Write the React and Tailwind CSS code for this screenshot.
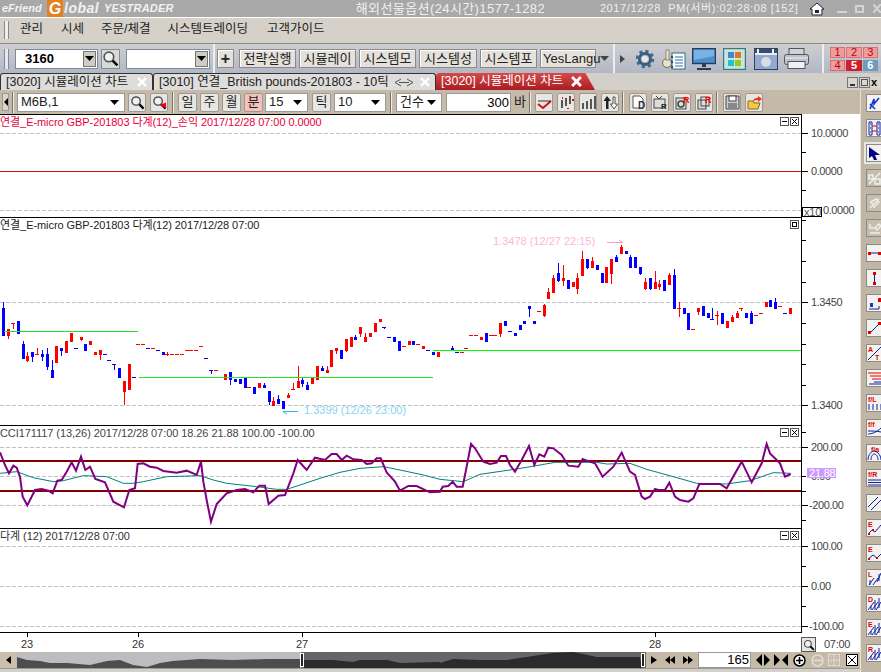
import React from "react";

// candles read off the chart: [colour, x, bodyTop, bodyBottom, wickTop, wickBottom], 3x coordinates
const blockA = [
  ["b",10,54,138,36,138],["r",25,118,138,118,147],["r",40,100,100,100,117],["b",55,93,132],["b",70,162,207,153,207],
  ["r",82,198,213,186,215],["b",97,186,201,186,216],["r",112,193,193,174,195],["b",127,192,201,180,213],["b",142,192,231,174,240],
  ["b",157,240,264,210,264],["r",169,168,219],["b",184,174,183,174,198],["r",199,153,189],["r",214,129,156],["b",229,175,175],
  ["r",244,141,150,141,153],["b",256,162,183],["r",271,153,165],["r",286,186,195],["r",301,180,195,180,210],["b",316,193,193],
  ["b",328,211,211],["b",343,223,223,222,240],["b",358,234,264],["r",373,273,306,273,345],["r",388,222,300],["b",403,262,262],
  ["r",415,163,163],["r",430,163,163],["b",445,175,175],["r",460,175,175],["b",475,181,181],["b",490,186,195],["r",502,193,193,186,198],
  ["r",517,193,193],["r",532,193,193],["r",547,193,193],["r",562,181,181],["r",574,181,181],["r",589,181,181],["r",604,169,169],
  ["b",619,205,205],["b",634,241,241,240,252],["r",649,241,241],["r",676,252,270],["b",691,246,270,246,285],["b",706,267,276],
  ["b",721,267,282],["b",736,264,294],["r",748,292,292],["b",763,291,312],["r",778,279,294],["b",793,285,294,279,294],
  ["b",808,303,335,303,345],["r",820,333,348,321,348],["b",835,327,342,315,342],["b",850,333,357],["r",865,315,324,309,324],
  ["r",880,298,298,279,300],["r",895,273,294,228,294],
];
const blockB = [
  ["b",907,240,252,231,261],["b",922,255,270,246,270],["r",937,234,252],["r",952,198,240],["b",967,204,213,198,213],["r",982,210,219,198,219],
  ["r",994,150,201],["r",1009,144,153,144,162],["b",1024,150,177],["r",1039,117,153,117,156],["r",1054,111,141],["b",1066,111,120,105,120],
  ["r",1081,81,102,81,111],["r",1096,111,126,99,126],["r",1111,99,111],["r",1126,69,96],["r",1141,57,66],["b",1153,81,81,81,87],
  ["b",1168,112,112],["b",1183,111,126],["b",1198,123,153],["r",1213,138,138],["r",1228,123,135],["b",1240,123,135],["r",1255,132,132],
  ["r",1270,138,147],["b",1285,150,150],["b",1300,156,165],["r",1315,156,171],
];
const blockC = [
  ["b",38,144,150,138,150],["b",53,156,156],["r",68,157,157],["r",80,145,145],["r",95,106,106],["r",110,106,106],["r",125,111,120],
  ["b",140,99,126],["r",155,106,106],["r",167,106,106],["r",182,69,102,69,111],["b",197,63,78],["b",212,94,94],["b",227,99,108],
  ["b",242,75,90],["b",254,63,72],["b",269,18,27,18,51],["b",284,63,72],["r",299,34,34],["r",314,15,48,12,51],
];
const blockD = [
  ["r",205,186,207,174,207],["r",220,144,189,135,189],["b",235,129,153,99,156],["r",250,144,153,105,168],["b",265,150,177],["r",280,156,171],
  ["r",292,144,177,129,192],["r",307,87,138,63,138],["b",322,87,114,87,117],["r",337,93,114,81,114],["b",352,105,120],["b",367,129,159],
  ["r",380,111,159],["r",394,87,132,87,162],["b",409,81,96,75,96],["r",424,51,72,45,72],["b",439,63,72],["b",451,81,114,75,114],
  ["b",466,81,114],["b",481,111,132,111,135],["r",496,156,177,144,180],["b",511,144,177,144,180],["r",526,156,177,123,177],
  ["r",538,162,171,150,180],["b",553,150,183],["r",568,135,165,129,165],["b",583,135,237,117,237],["r",598,234,234,216,261],
  ["b",613,234,252],["b",625,249,300],["r",640,298,298],["r",655,234,246,234,255],["b",670,228,258],["b",685,249,264],
  ["b",697,268,268,234,270],["r",712,256,256,243,285],["b",727,249,282],["r",742,273,294],["r",757,261,276,255,276],
  ["r",772,249,264,243,264],["r",784,235,235,234,243],["b",799,249,264],["b",814,249,282,243,282],["r",829,256,256],["r",844,250,250],
  ["r",859,216,231],["b",871,210,231],["b",886,216,237,204,237],["r",901,229,229],["b",916,250,250],["r",931,234,252],
];

const toCandles = (rows, ox, oy) =>
  rows.map(([c, x, bt, bb, wt, wb]) => ({
    c: c === "r" ? "#ff0000" : "#0000ff",
    x: Math.floor(ox + x / 3),
    bt: Math.round(oy + bt / 3),
    bh: Math.max(1, Math.round((bb - bt) / 3)),
    wt: wt === undefined ? null : Math.round(oy + wt / 3),
    wh: wt === undefined ? 0 : Math.round((wb - wt) / 3),
    doji: bb === bt,
  }));

const candles = [
  ...toCandles(blockA, 0, 290),
  ...toCandles(blockB, 0, 300),
  ...toCandles(blockC, 440, 300),
  ...toCandles(blockD, 480, 230),
];

const pts = (ox, list) => list.map(([x, y]) => `${ox + x / 3},${300 + y / 3}`).join(" ");

const cciLine =
  pts(0, [[0,457],[15,495],[27,520],[40,497],[50,503],[60,530],[68,590],[82,616],[105,570],[125,567],[145,572],[158,580],[172,542],[185,540],[200,515],[215,487],[228,512],[243,470],[256,510],[270,500],[286,537],[315,547],[340,605],[372,622],[388,570],[405,565],[413,492],[430,490],[450,500],[470,503],[490,513],[530,518],[560,512],[590,525],[603,485],[610,545],[620,600],[633,665],[650,612],[680,580],[710,570],[735,567],[760,577],[778,557],[795,557],[806,612],[835,587],[855,585],[880,520],[893,480],[920,510],[945,473],[975,480],[995,462],[1010,462],[1025,480],[1040,467],[1060,478],[1085,480],[1100,492],[1115,490],[1130,475],[1142,475],[1160,517],[1185,545],[1200,572],[1225,558],[1250,558],[1290,577],[1320,575]]) +
  " " +
  pts(440, [[8,560],[25,558],[38,545],[50,560],[68,560],[80,500],[93,432],[105,445],[130,485],[150,492],[170,488],[183,468],[198,468],[210,495],[225,515],[245,480],[267,438],[283,495],[298,463],[313,470],[325,443],[340,445],[365,465],[385,497],[415,500],[428,477],[435,480],[465,490],[488,530],[520,500],[545,458],[570,515],[585,525],[605,590],[615,597],[630,590],[645,567],[655,570],[675,570],[688,548],[705,590],[720,600],[745,605],[760,595],[778,552],[840,552],[860,565],[905,485],[935,547],[965,490],[980,432],[990,460],[1020,490],[1035,530],[1052,522]]);

const cciAvg =
  pts(0, [[0,520],[50,515],[100,533],[160,545],[190,542],[250,527],[320,530],[370,550],[400,550],[430,545],[500,530],[600,527],[640,540],[680,550],[770,560],[830,568],[860,568],[900,555],[960,535],[1020,517],[1080,505],[1150,500],[1200,510],[1270,525],[1320,538]]) +
  " " +
  pts(440, [[70,545],[120,523],[230,507],[300,495],[345,487],[470,487],[500,492],[570,490],[620,508],[700,530],[770,550],[860,552],[930,542],[1000,518],[1052,520]]);

const Dash = ({ y }) => (
  <line x1="0" x2="801" y1={y + 0.5} y2={y + 0.5} stroke="#c0c0c0" strokeDasharray="4 2" shapeRendering="crispEdges" />
);

const HLine = ({ y, x1 = 0, x2 = 801, color, h = 1 }) => (
  <rect x={x1} y={y} width={x2 - x1} height={h} fill={color} shapeRendering="crispEdges" />
);

const PaneBox = ({ kind }) => (
  <div className="w-[9px] h-[9px] border border-[#555] bg-white flex items-center justify-center">
    {kind === "min" && <div className="w-[5px] h-px bg-black" />}
    {kind === "max" && <div className="w-[5px] h-[5px] border border-black" />}
    {kind === "close" && (
      <svg width="7" height="7" viewBox="0 0 7 7">
        <path d="M1 1L6 6M6 1L1 6" stroke="#000" />
      </svg>
    )}
  </div>
);

const Pane = ({ top, height, title, titleClass, boxes, children, axis, axisExtra }) => (
  <div className="flex" style={{ height }}>
    <div className="relative w-[802px] border-t border-r border-black">
      <svg width="801" height={height - 1} viewBox={`0 ${top + 1} 801 ${height - 1}`} className="block">
        {children}
      </svg>
      <div className={`absolute left-0 top-0 text-[11px] leading-[14px] tracking-[-0.07px] whitespace-nowrap ${titleClass}`}>{title}</div>
      <div className="absolute right-[2px] top-[2px] flex gap-[1px]">
        {boxes.map((b) => (
          <PaneBox key={b} kind={b} />
        ))}
      </div>
    </div>
    <svg width="59" height={height} viewBox={`802 ${top} 59 ${height}`} className="block overflow-visible">
      {axis.ticks.map((t) => (
        <rect key={t} x="802" y={t} width="4" height="1" fill="#000" />
      ))}
      {axis.major.map((t) => (
        <rect key={t} x="802" y={t} width="6" height="1" fill="#000" />
      ))}
      {axis.labels.map(([txt, y, x = 811]) => (
        <text key={txt + y} x={x} y={y + 4} fontSize="11" fill="#444" letterSpacing="-0.4" fontFamily="Liberation Sans">
          {txt}
        </text>
      ))}
      {axisExtra}
    </svg>
  </div>
);

const Arrow = ({ className = "", color = "#000" }) => (
  <svg width="9" height="5" viewBox="0 0 9 5" className={className}>
    <path d="M0 0H9L4.5 5Z" fill={color} />
  </svg>
);

const Glass = ({ size = 16, handle = "#000", extra }) => (
  <svg width={size} height={size} viewBox="0 0 16 16">
    <circle cx="6.5" cy="6.5" r="4.5" fill="#eef2f6" stroke="#555" strokeWidth="1.6" />
    <path d="M10 10L14.5 14.5" stroke={handle} strokeWidth="2.4" />
    {extra}
  </svg>
);

const TopCombo = ({ w, value }) => (
  <div className="flex items-center h-[20px] bg-white border border-[#7f8a9c] pr-[1px]" style={{ width: w }}>
    <span className="flex-1 pl-[9px] text-[13px] font-bold">{value}</span>
    <span className="w-[13px] h-[16px] bg-[#cfccc4] border border-[#777] flex items-center justify-center">
      <Arrow />
    </span>
  </div>
);

const TopBtn = ({ w, children, className = "" }) => (
  <div
    className={`flex items-center justify-center h-[19px] bg-[#e4e1da] border border-[#8a8a8a] shadow-[inset_1px_1px_0_#fff] text-[13px] text-[#222] ${className}`}
    style={{ width: w }}
  >
    {children}
  </div>
);

const GearIcon = () => (
  <svg width="20" height="20" viewBox="0 0 20 20">
    <circle cx="10" cy="10" r="7.6" fill="none" stroke="#456a8c" strokeWidth="3.4" strokeDasharray="3 3" />
    <circle cx="10" cy="10" r="5.6" fill="none" stroke="#3c5d80" strokeWidth="3" />
    <circle cx="10" cy="10" r="3" fill="#e8e8e8" />
  </svg>
);

const KeysIcon = () => (
  <svg width="25" height="22" viewBox="0 0 25 22">
    <circle cx="6" cy="15" r="4.5" fill="#e8e0c8" stroke="#6b6b55" />
    <rect x="5" y="2" width="3" height="10" fill="#efe6cc" stroke="#6b6b55" strokeWidth="0.7" />
    <rect x="11" y="5" width="13" height="16" fill="#fff" stroke="#2f6f7a" />
    <path d="M14 9h8M14 12h8M14 15h8M14 18h8" stroke="#2b6fa8" />
    <circle cx="11" cy="9" r="1.2" fill="#1d4e7e" />
    <circle cx="11" cy="14" r="1.2" fill="#1d4e7e" />
    <circle cx="11" cy="19" r="1.2" fill="#1d4e7e" />
  </svg>
);

const MonitorIcon = () => (
  <svg width="24" height="22" viewBox="0 0 24 22">
    <rect x="0.5" y="0.5" width="23" height="15" fill="#4a8fd0" stroke="#2c3a52" strokeWidth="1.4" />
    <path d="M2 2H22V8L2 12Z" fill="#79b2e4" />
    <path d="M10 16h4v3h-4z" fill="#2c3a52" />
    <path d="M5 20h14v2H5z" fill="#2c3a52" />
  </svg>
);

const PaletteIcon = () => (
  <svg width="23" height="22" viewBox="0 0 23 22">
    <rect x="0.5" y="0.5" width="22" height="21" fill="#cfe3de" stroke="#337f78" strokeWidth="1.4" />
    <rect x="5" y="4" width="6" height="6" fill="#3a8ad8" />
    <rect x="12" y="4" width="6" height="6" fill="#e07818" />
    <rect x="5" y="12" width="6" height="6" fill="#18c8d0" />
    <rect x="12" y="12" width="6" height="6" fill="#98c818" />
  </svg>
);

const CameraIcon = () => (
  <svg width="24" height="22" viewBox="0 0 24 22">
    <rect x="0.5" y="0.5" width="23" height="21" fill="#e8eef6" stroke="#33415c" />
    <rect x="1" y="1" width="22" height="4" fill="#3a4c70" />
    <path d="M4 1v4M19 1v4" stroke="#e8eef6" strokeWidth="2" />
    <rect x="1" y="7" width="22" height="14" fill="#93a9cf" />
    <circle cx="12" cy="14" r="5" fill="#d8dde6" />
  </svg>
);

const PrinterIcon = () => (
  <svg width="25" height="22" viewBox="0 0 25 22">
    <rect x="5" y="0.5" width="15" height="6" fill="#cfd4dc" stroke="#555" />
    <rect x="0.5" y="6.5" width="24" height="10" rx="2" fill="#bcc3ce" stroke="#555" />
    <path d="M1 10H24" stroke="#eef" />
    <rect x="4" y="13.5" width="17" height="7" fill="#eef0f4" stroke="#555" />
  </svg>
);

const PadCell = ({ n, className }) => (
  <div className={`h-[11px] flex items-center justify-center text-[11px] leading-none ${className}`}>{n}</div>
);

const TitleBar = () => (
  <div className="flex items-center h-[17px] bg-[#a8a8a8] text-white overflow-hidden">
    <div className="flex items-center w-[357px] pl-[2px] italic font-bold">
      <span className="text-[11px] w-[44px] text-[#f2f2f2]">eFriend</span>
      <span className="ml-[1px] w-[16px] h-[17px] bg-[#e5801f] text-[16px] leading-[17px] text-center text-white">G</span>
      <span className="text-[14px] ml-[1px] w-[40px] text-[#f2f2f2] tracking-[0.5px]">lobal</span>
      <span className="text-[11px] text-[#f2f2f2] tracking-[0.2px]">YESTRADER</span>
    </div>
    <span className="w-[245px] text-[13px] text-[#f0f0f0] tracking-[0.4px] whitespace-nowrap">해외선물옵션(24시간)1577-1282</span>
    <span className="w-[210px] text-[11px] text-[#f0f0f0] tracking-[0.6px] whitespace-nowrap">2017/12/28&nbsp;&nbsp;PM(서버):02:28:08 [152]</span>
    <svg width="16" height="14" viewBox="0 0 16 14">
      <path d="M8 1L1 7H3V13H13V7H15Z" fill="#fff" stroke="#223" />
      <rect x="6" y="8" width="4" height="3" fill="#223" />
    </svg>
    <div className="ml-[12px] w-[10px] h-[2px] mt-[7px] bg-[#d4d4d4]" />
    <div className="ml-[8px] w-[9px] h-[8px] border-[2px] border-[#d4d4d4]" />
    <svg width="8" height="9" viewBox="0 0 8 9" className="ml-[9px]">
      <path d="M0 0L8 9M8 0L0 9" stroke="#d4d4d4" strokeWidth="2" />
    </svg>
  </div>
);

const MenuBar = () => (
  <div className="flex items-center h-[26px] border-t border-white bg-[#d5d1c9] text-[12.5px] text-[#222] pb-[2px]">
    <div className="ml-[4px] w-[5px] h-[18px] border-x border-[#888] bg-[#eee]" />
    <span className="ml-[11px]">관리</span>
    <span className="ml-[18px]">시세</span>
    <span className="ml-[17px]">주문/체결</span>
    <span className="ml-[17px]">시스템트레이딩</span>
    <span className="ml-[19px]">고객가이드</span>
  </div>
);

const MainToolbar = () => (
  <div className="flex items-center h-[30px] border-t border-[#8a8a8a] bg-linear-to-b from-[#cfcfd0] to-[#b2b7c5]">
    <div className="ml-[4px] w-[5px] h-[20px] border-x border-[#7c8aa0] bg-[#e6e8ee]" />
    <div className="ml-[6px]">
      <TopCombo w={83} value="3160" />
    </div>
    <div className="ml-[3px] w-[19px] h-[20px] bg-[#d8d8d8] border border-[#8a8a8a] flex items-center justify-center">
      <Glass size={17} />
    </div>
    <div className="ml-[6px]">
      <TopCombo w={84} value="" />
    </div>
    <div className="ml-[3px] w-[2px] h-[30px] bg-[#eeeeee]" />
    <TopBtn w={17} className="ml-[2px] font-bold text-[16px]">+</TopBtn>
    <TopBtn w={57} className="ml-[5px]">전략실행</TopBtn>
    <TopBtn w={57} className="ml-[3px]">시뮬레이</TopBtn>
    <TopBtn w={57} className="ml-[3px]">시스템모</TopBtn>
    <TopBtn w={58} className="ml-[3px]">시스템성</TopBtn>
    <TopBtn w={57} className="ml-[3px]">시스템포</TopBtn>
    <TopBtn w={56} className="ml-[3px] justify-start! pl-[2px] text-[12px] whitespace-nowrap">YesLangu</TopBtn>
    <Arrow className="ml-[4px]" color="#444" />
    <div className="ml-[4px] w-[2px] h-[30px] bg-[#eeeeee]" />
    <svg width="5" height="8" viewBox="0 0 5 8" className="ml-[5px]">
      <path d="M0 0L5 4L0 8Z" fill="#444" />
    </svg>
    <div className="ml-[10px] flex items-center"><GearIcon /></div>
    <div className="ml-[6px] flex items-center"><KeysIcon /></div>
    <div className="ml-[6px] flex items-center"><MonitorIcon /></div>
    <div className="ml-[7px] flex items-center"><PaletteIcon /></div>
    <div className="ml-[8px] flex items-center"><CameraIcon /></div>
    <div className="ml-[6px] flex items-center"><PrinterIcon /></div>
    <div className="ml-[13px] w-[2px] h-[30px] bg-[#eeeeee]" />
    <div className="ml-[6px] w-[48px] grid grid-cols-3 gap-x-[1px] gap-y-[2px]">
      <PadCell n="1" className="bg-[#f39a9a] border border-[#d87070] text-[#a01010]" />
      <PadCell n="2" className="bg-[#f39a9a] border border-[#d87070] text-[#a01010]" />
      <PadCell n="3" className="bg-[#f39a9a] border border-[#d87070] text-[#a01010]" />
      <PadCell n="4" className="bg-[#f39a9a] border border-[#d87070] text-[#a01010]" />
      <PadCell n="5" className="bg-[#d0202e] text-white font-bold" />
      <PadCell n="6" className="bg-[#6f9bbc] text-white font-bold" />
    </div>
  </div>
);

const Tab = ({ w, children, icon }) => (
  <div
    className="relative flex items-center h-[17px] bg-[#dedddb] border-t border-x border-[#333] rounded-t-[3px] text-[12.5px] text-[#222] pl-[5px] whitespace-nowrap"
    style={{ width: w }}
  >
    {children}
    {icon}
    <svg width="10" height="10" viewBox="0 0 10 10" className="absolute right-[5px] top-[3px]">
      <path d="M1 1L9 9M9 1L1 9" stroke="#fff" strokeWidth="2.4" />
    </svg>
  </div>
);

const TabBar = () => (
  <div className="flex items-end h-[17px] bg-[#d3d0ca]">
    <Tab w={153}>[3020] 시뮬레이션 차트</Tab>
    <Tab
      w={283}
      icon={
        <svg width="20" height="9" viewBox="0 0 20 9" className="ml-[5px]">
          <path d="M7 1L1 4.5L7 8M13 1L19 4.5L13 8M5 4.5H15" fill="none" stroke="#555" />
        </svg>
      }
    >
      [3010] 연결_British pounds-201803 - 10틱
    </Tab>
    <div className="relative flex items-center w-[159px] h-[17px] bg-linear-to-b from-[#d84848] to-[#a81c24] rounded-tl-[3px] [clip-path:polygon(0_0,94%_0,100%_100%,0_100%)] text-[12.5px] text-white pl-[5px] whitespace-nowrap">
      [3020] 시뮬레이션 차트
      <svg width="11" height="11" viewBox="0 0 10 10" className="absolute right-[13px] top-[3px]">
        <path d="M1 1L9 9M9 1L1 9" stroke="#fff" strokeWidth="2.6" />
      </svg>
    </div>
    <div className="ml-auto flex gap-[1px] pr-[1px] pb-[2px]">
      <div className="w-[11px] h-[11px] bg-[#d8d5cf] border border-[#777] flex items-end justify-center pb-[1px]"><div className="w-[5px] h-[2px] bg-[#333]" /></div>
      <div className="w-[11px] h-[11px] bg-[#d8d5cf] border border-[#777] flex items-center justify-center"><div className="w-[7px] h-[7px] border border-[#555]" /></div>
      <div className="w-[9px] h-[11px] bg-[#d8d5cf] text-[11px] font-bold leading-[10px]">x</div>
    </div>
  </div>
);

const SmallBtn = ({ w = 19, children, className = "" }) => (
  <div
    className={`flex items-center justify-center h-[19px] bg-[#e8e6e2] border border-[#999] rounded-[2px] text-[13px] text-[#222] shrink-0 ${className}`}
    style={{ width: w }}
  >
    {children}
  </div>
);

const LowCombo = ({ w, value, className = "" }) => (
  <div className={`flex items-center justify-between h-[19px] bg-white border border-[#999] pl-[3px] pr-[5px] text-[13px] text-[#222] shrink-0 ${className}`} style={{ width: w }}>
    <span>{value}</span>
    <Arrow />
  </div>
);

const Sep = ({ ml }) => <div className="w-[2px] h-[21px] bg-[#77736a] border-r border-[#eee] shrink-0" style={{ marginLeft: ml }} />;

const Ico = ({ children }) => (
  <svg width="15" height="15" viewBox="0 0 15 15">
    {children}
  </svg>
);

const ChartToolbar = () => (
  <div className="flex items-center h-[24px] bg-[#c4baa7] overflow-hidden">
    <div className="ml-[2px] w-[7px] h-[18px] bg-[#d8d5cd] border border-[#999] flex items-center justify-center">
      <svg width="4" height="8" viewBox="0 0 4 8"><path d="M4 0L0 4L4 8Z" fill="#000" /></svg>
    </div>
    <Sep ml={3} />
    <LowCombo w={108} value="M6B,1" className="ml-[3px]" />
    <SmallBtn w={18} className="ml-[3px]"><Glass size={15} /></SmallBtn>
    <SmallBtn w={18} className="ml-[4px]">
      <Glass size={15} extra={<path d="M8 11L15 8V14Z" fill="#f00010" />} />
    </SmallBtn>
    <Sep ml={4} />
    <SmallBtn className="ml-[4px]">일</SmallBtn>
    <SmallBtn className="ml-[3px]">주</SmallBtn>
    <SmallBtn className="ml-[3px]">월</SmallBtn>
    <SmallBtn className="ml-[3px] bg-[#f8c0bc]!">분</SmallBtn>
    <LowCombo w={43} value="15" className="ml-[2px]" />
    <SmallBtn className="ml-[4px]">틱</SmallBtn>
    <LowCombo w={52} value="10" className="ml-[3px]" />
    <Sep ml={4} />
    <LowCombo w={46} value="건수" className="ml-[4px]" />
    <div className="ml-[4px] w-[65px] h-[19px] bg-white border border-[#999] text-[13px] text-right pr-[1px] leading-[17px] shrink-0">300</div>
    <span className="ml-[3px] text-[13px] text-[#222] w-[14px]">바</span>
    <Sep ml={1} />
    <SmallBtn w={18} className="ml-[4px]">
      <Ico><path d="M1 9L6 13L14 6" fill="none" stroke="#d01010" strokeWidth="2" /><path d="M1 6H14" stroke="#333" /></Ico>
    </SmallBtn>
    <SmallBtn w={18} className="ml-[4px]">
      <Ico><path d="M2 5h2v8H2zM6 3h2v8H6zM10 1h2v8h-2z" fill="#555" /><path d="M3 2h1v2H3zM8 13h2v1H8zM13 4h2v2h-2z" fill="#f00" /></Ico>
    </SmallBtn>
    <SmallBtn w={18} className="ml-[4px]">
      <Ico><path d="M1 8h2v6H1zM5 6h2v8H5zM9 4h2v10H9zM13 1h2v13h-2z" fill="#555" /></Ico>
    </SmallBtn>
    <SmallBtn w={18} className="ml-[4px]">
      <Ico><path d="M4 1L8 6H5.5V14H3V6H0.5Z" fill="#222" /><path d="M11 14L7.5 9H10V2H12V9H14.5Z" fill="#fff" stroke="#555" /></Ico>
    </SmallBtn>
    <Sep ml={3} />
    <SmallBtn w={18} className="ml-[5px]">
      <Ico><path d="M2 1H9L12 4V13H2Z" fill="#fff" stroke="#555" /><text x="7" y="14" fontSize="10" fontWeight="700" fill="#333">D</text></Ico>
    </SmallBtn>
    <SmallBtn w={18} className="ml-[4px]">
      <Ico><rect x="1" y="4" width="11" height="9" fill="#ddd" stroke="#444" /><path d="M3 1L6 4L9 1" fill="none" stroke="#444" /><text x="8" y="14" fontSize="8" fontWeight="700" fill="#222">R</text></Ico>
    </SmallBtn>
    <SmallBtn w={18} className="ml-[4px]">
      <Ico><rect x="1" y="3" width="10" height="11" fill="#ddd" stroke="#444" /><circle cx="6" cy="9" r="3" fill="none" stroke="#444" strokeWidth="1.5" /><text x="8" y="8" fontSize="9" fontWeight="700" fill="#f00">R</text></Ico>
    </SmallBtn>
    <SmallBtn w={18} className="ml-[4px]">
      <Ico><rect x="1" y="5" width="8" height="9" fill="#ddd" stroke="#444" /><rect x="4" y="2" width="8" height="9" fill="none" stroke="#444" /><text x="8" y="8" fontSize="9" fontWeight="700" fill="#f00">R</text></Ico>
    </SmallBtn>
    <Sep ml={3} />
    <SmallBtn w={18} className="ml-[5px]">
      <Ico><path d="M1 1H14V14H1Z" fill="#ccc" stroke="#444" /><rect x="4" y="1" width="7" height="5" fill="#fff" stroke="#444" /><rect x="3" y="8" width="9" height="6" fill="#888" /></Ico>
    </SmallBtn>
    <SmallBtn w={18} className="ml-[4px]">
      <Ico><path d="M1 6H6L7 8H13L11 14H1Z" fill="#f4c84c" stroke="#8a6a10" /><path d="M6 6C7 3 9 3 11 3V1L15 4L11 7V5C9 5 8 5 6 6Z" fill="#f03010" /></Ico>
    </SmallBtn>
  </div>
);

// side palette of drawing tools
const Side = ({ children, gray, selected }) => (
  <div
    className={`w-[17px] h-[18px] shrink-0 border border-[#8a8a8a] flex items-center justify-center ${
      gray ? "bg-[#c6bdac]" : "bg-[#f4f2ee]"
    } ${selected ? "outline-2 outline-[#e8e6e0]" : ""}`}
  >
    <svg width="15" height="15" viewBox="0 0 15 15">
      {children}
    </svg>
  </div>
);

const Lbl = ({ t, x = 1, y = 6, fill = "#e00000" }) => (
  <text x={x} y={y} fontSize="7" fontWeight="700" fill={fill} fontFamily="Liberation Sans">
    {t}
  </text>
);

const Sidebar = () => (
  <div className="w-[21px] pl-[5px] pt-[4px] flex flex-col gap-[7px] bg-[#c0b6a5] overflow-hidden border-l border-[#e6e2da]">
    <Side><path d="M3 13L7 3V8L12 2" stroke="#1038d0" fill="none" strokeWidth="1.6" /><path d="M3 8L8 13" stroke="#1038d0" strokeWidth="1.6" /></Side>
    <Side><path d="M2 1h3v13H2zM10 1h3v13h-3z" fill="none" stroke="#1020a0" /><path d="M5 5h5M5 10h5" stroke="#e00000" /><path d="M3 3h1M11 3h1M3 7h1M11 7h1M3 11h1M11 11h1" stroke="#1020a0" /></Side>
    <Side selected><path d="M2 1L13 9H8L10 14L7 14L5 10L2 12Z" fill="#000088" /></Side>
    <Side gray><path d="M2 13L13 2M2 4h4v4H2zM8 8h5v5H8z" fill="none" stroke="#eee" strokeWidth="1.5" /></Side>
    <Side gray><path d="M3 12L12 3M4 6l5-3 3 3-5 5z" fill="none" stroke="#eee" strokeWidth="1.5" /></Side>
    <Side gray><path d="M3 3v4h4M3 12H13M8 7l4-4 2 2-4 4z" fill="none" stroke="#eee" strokeWidth="1.5" /></Side>
    <Side><path d="M3 7H12" stroke="#1020a0" /><path d="M1 6h3v3H1zM11 6h3v3h-3z" fill="#e00000" /></Side>
    <Side><path d="M7.5 3V12" stroke="#1020a0" /><path d="M6 1h3v3H6zM6 11h3v3H6z" fill="#e00000" /></Side>
    <Side><path d="M2 13H12V10" fill="none" stroke="#1020a0" /><path d="M3 7h3v4H3z" fill="#1038d0" /><path d="M11 2h3v4h-3z" fill="#e00000" /></Side>
    <Side><path d="M3 12L12 3" stroke="#1020a0" /><path d="M1 10h3v3H1zM11 1h3v3h-3z" fill="#e00000" /></Side>
    <Side><path d="M1 14L14 1" stroke="#1020a0" /><Lbl t="A" /><Lbl t="T" x="8" y="14" /></Side>
    <Side><path d="M1 2H14M3 5H14M5 8H14" stroke="#e00000" /><path d="M7 11H14M2 13H14" stroke="#1020a0" /></Side>
    <Side><Lbl t="f/L" /><path d="M2 8v6M6 8v6M10 8v6M14 8v6" stroke="#1020a0" /></Side>
    <Side><Lbl t="f/f" /><path d="M1 13C5 13 10 11 14 7M1 10C5 10 10 10 14 11" fill="none" stroke="#1020a0" /></Side>
    <Side><Lbl t="f/a" x="4" /><path d="M1 14C1 8 5 5 7 5C9 5 14 8 14 14M4 14C4 10 6 8 7 8C9 8 11 10 11 14" fill="none" stroke="#1020a0" /></Side>
    <Side><Lbl t="f/R" /><path d="M1 9H14M1 11.5H14M1 14H14" stroke="#1020a0" /></Side>
    <Side><path d="M1 11L11 1M4 14L14 4" stroke="#1020a0" /></Side>
    <Side><Lbl t="E" /><path d="M1 13L5 9L8 11L14 4" fill="none" stroke="#1020a0" /><path d="M1 12h2v2H1zM5 8h2v2H5z" fill="#e00000" /></Side>
    <Side><Lbl t="E" /><path d="M1 13L6 9L10 12L14 8" fill="none" stroke="#1020a0" /><path d="M1 12h2v2H1zM9 11h2v2H9z" fill="#e00000" /></Side>
    <Side><Lbl t="L" /><path d="M2 14L7 7M6 14L11 7M10 11L14 2M3 14V9M12 10V3" stroke="#1020a0" fill="none" /></Side>
    <Side><Lbl t="D" /><path d="M1 14L7 6M5 14L11 6M9 14L14 6M4 10V14M8 4V14M12 2V12" stroke="#1020a0" fill="none" /></Side>
    <Side><Lbl t="E" /><path d="M1 14L7 6M5 14L11 6M9 14L14 6M4 10V14M8 4V14M12 2V12" stroke="#1020a0" fill="none" /></Side>
    <Side><Lbl t="R" /><path d="M1 14L7 6M5 14L11 6M9 14L14 6M4 10V14M8 4V14M12 2V12" stroke="#1020a0" fill="none" /></Side>
  </div>
);

const PriceChart = () => (
  <>
    <Dash y={302} />
    <Dash y={405} />
    {candles.map((k, i) => (
      <g key={i} shapeRendering="crispEdges" fill={k.c}>
        {k.wt !== null && <rect x={k.x} y={k.wt} width="1" height={k.wh} />}
        {k.doji ? <rect x={k.x - 2} y={k.bt} width="4" height="1" /> : <rect x={k.x - 1} y={k.bt} width="3" height={k.bh} />}
      </g>
    ))}
    <HLine y={331} x1={4} x2={138} color="#22e622" />
    <HLine y={377} x1={139} x2={433} color="#22e622" />
    <HLine y={350} x1={433} x2={801} color="#00ff00" />
    <text x="493" y="245" fontSize="11" fill="#ffb4d8" fontFamily="Liberation Sans">1.3478 (12/27 22:15)</text>
    <path d="M607 242.5H623M619 240L623 242.5" stroke="#ff98c8" fill="none" />
    <text x="304" y="414" fontSize="11" fill="#88d4f4" fontFamily="Liberation Sans">1.3399 (12/26 23:00)</text>
    <path d="M283 411.5H298M283 411.5L287 414" stroke="#30b8f0" fill="none" />
  </>
);

const CciChart = () => (
  <>
    <Dash y={447} />
    <Dash y={476} />
    <Dash y={505} />
    <polyline points={cciAvg} fill="none" stroke="#008080" strokeWidth="1" />
    <HLine y={460} color="#800000" h={2} />
    <HLine y={490} color="#800000" h={2} />
    <polyline points={cciLine} fill="none" stroke="#800080" strokeWidth="2" />
  </>
);

const panes = [
  {
    top: 114,
    height: 103,
    title: "연결_E-micro GBP-201803 다계(12)_손익 2017/12/28 07:00 0.0000",
    titleClass: "text-[#e8003c]",
    boxes: ["min", "close"],
    axis: {
      ticks: [152, 190],
      major: [133, 171, 210],
      labels: [["10.0000", 133], ["0.0000", 171], ["0.0000", 210, 823]],
    },
    axisExtra: (
      <>
        <rect x="802.5" y="207.5" width="19" height="9" fill="#fff" stroke="#000" />
        <text x="804" y="216" fontSize="11" fill="#555" letterSpacing="-0.2" fontFamily="Liberation Sans">x10</text>
      </>
    ),
  },
  {
    top: 217,
    height: 208,
    title: "연결_E-micro GBP-201803 다계(12)  2017/12/28 07:00",
    titleClass: "text-[#222]",
    boxes: ["max"],
    axis: {
      ticks: [220, 240, 261, 282, 323, 344, 364, 385],
      major: [302, 405],
      labels: [["1.3450", 302], ["1.3400", 405]],
    },
  },
  {
    top: 425,
    height: 103,
    title: "CCI171117  (13,26) 2017/12/28 07:00 18.26 21.88 100.00 -100.00",
    titleClass: "text-[#444]",
    boxes: ["min", "close"],
    axis: {
      ticks: [432, 476, 491, 520],
      major: [447, 505],
      labels: [["200.00", 447], ["0.00", 476], ["-200.00", 505, 809]],
    },
    axisExtra: (
      <>
        <rect x="807" y="468" width="29" height="10" fill="#cc99ff" />
        <text x="809" y="477" fontSize="11" fill="#fff" letterSpacing="-0.2" fontFamily="Liberation Sans">21.88</text>
      </>
    ),
  },
  {
    top: 528,
    height: 104,
    title: "다계  (12) 2017/12/28 07:00",
    titleClass: "text-[#333]",
    boxes: ["min", "close"],
    axis: {
      ticks: [566, 606],
      major: [546, 586, 626],
      labels: [["100.00", 546], ["0.00", 586], ["-100.00", 626, 809]],
    },
  },
];

const XAxis = () => (
  <div className="relative h-[20px] border-t border-black w-[802px]">
    <svg width="802" height="19" className="block overflow-visible">
      {[27, 138, 302, 655].map((x) => (
        <rect key={x} x={x} y="0" width="1" height="4" fill="#000" />
      ))}
      {[["23", 21], ["26", 132], ["27", 296], ["28", 649]].map(([t, x]) => (
        <text key={t} x={x} y="15" fontSize="11" fill="#333" letterSpacing="-0.2" fontFamily="Liberation Sans">
          {t}
        </text>
      ))}
    </svg>
    <div className="absolute left-[801px] top-[4px] w-[15px] h-[15px] border border-[#555] bg-[#e8e6e2] flex items-center justify-center">
      <Glass size={12} />
    </div>
    <span className="absolute left-[824px] top-[4px] text-[11px] leading-[14px] text-[#444] tracking-[-0.3px]">07:00</span>
  </div>
);

const Ctl = ({ w, children, ml = 0 }) => (
  <div className="h-[16px] flex items-center justify-center shrink-0" style={{ width: w, marginLeft: ml }}>
    {children}
  </div>
);

const Overview = () => (
  <div className="flex h-[16px] bg-[#c4baa7]">
    <div className="w-[16px] flex items-center justify-center bg-[#c9bfac]">
      <svg width="5" height="8" viewBox="0 0 5 8"><path d="M5 0L0 4L5 8Z" fill="#000" /></svg>
    </div>
    <svg width="630" height="16" viewBox="16 652 630 16" className="block shrink-0">
      <rect x="16" y="652" width="285" height="16" fill="#bdbdbd" />
      <rect x="301" y="652" width="345" height="16" fill="#666666" />
      <polygon fill="#4d4d4d" points="17,668 17,657 20,658 27,660 40,661 50,663 67,663 90,665 107,661 120,660 133,665 147,667 160,663 173,661 200,659 233,660 267,659 300,659 300,668" />
      <polygon fill="#2b2b2b" points="304,668 304,660 333,660 353,662 360,660 387,660 400,663 440,662 440,663 453,659 480,660 507,660 533,656 553,653 573,652 597,657 640,657 642,668" />
      <rect x="300.5" y="653.5" width="3" height="13" fill="#222" stroke="#fff" />
      <rect x="641.5" y="653.5" width="3" height="13" fill="#222" stroke="#fff" />
    </svg>
    <Ctl w={15}>
      <svg width="6" height="8" viewBox="0 0 6 8"><path d="M0 0L6 4L0 8Z" /></svg>
    </Ctl>
    <Ctl w={16} ml={1}>
      <svg width="10" height="8" viewBox="0 0 10 8"><path d="M5 0L0 4L5 8ZM10 0L5 4L10 8Z" /></svg>
    </Ctl>
    <Ctl w={16} ml={2}>
      <svg width="10" height="8" viewBox="0 0 10 8"><path d="M0 0L5 4L0 8ZM5 0L10 4L5 8Z" /></svg>
    </Ctl>
    <div className="ml-[2px] w-[53px] h-[16px] bg-white border border-[#999] text-[13px] leading-[14px] text-right pr-[1px] shrink-0">165</div>
    <Ctl w={16} ml={4}>
      <svg width="14" height="12" viewBox="0 0 14 12"><path d="M6 0L0 6L6 12ZM8 0L14 6L8 12Z" /></svg>
    </Ctl>
    <Ctl w={16} ml={2}>
      <svg width="14" height="12" viewBox="0 0 14 12"><path d="M0 0L6 6L0 12ZM14 0L8 6L14 12Z" /></svg>
    </Ctl>
    <Ctl w={14} ml={3}>
      <svg width="13" height="13" viewBox="0 0 13 13"><circle cx="6.5" cy="6.5" r="5.5" fill="#fff" stroke="#000" strokeWidth="1.5" /><path d="M6.5 3V10M3 6.5H10" stroke="#000" strokeWidth="1.6" /></svg>
    </Ctl>
    <Ctl w={14} ml={4}>
      <svg width="13" height="13" viewBox="0 0 13 13"><circle cx="6.5" cy="6.5" r="5.5" fill="none" stroke="#e0ddd6" strokeWidth="1.5" /><path d="M2 6.5H11" stroke="#e0ddd6" strokeWidth="1.6" /></svg>
    </Ctl>
    <Ctl w={12} ml={4}>
      <svg width="12" height="12" viewBox="0 0 12 12"><path d="M.5.5h11v11H.5zM6 .5v11M.5 6h11M3 3h1M8 3h1M3 8h1M8 8h1" fill="none" stroke="#e0ddd6" /></svg>
    </Ctl>
    <Ctl w={12} ml={6}>
      <svg width="12" height="12" viewBox="0 0 12 12"><rect x=".5" y=".5" width="11" height="11" fill="#fff" stroke="#000" /><path d="M2 2L10 10M10 2L2 10" stroke="#000" /></svg>
    </Ctl>
  </div>
);

export default function App() {
  return (
    <div className="w-[881px] h-[672px] overflow-hidden flex flex-col bg-white text-black font-['Liberation_Sans','Noto_Sans_CJK_KR',sans-serif]">
      <TitleBar />
      <MenuBar />
      <MainToolbar />
      <TabBar />
      <div className="flex flex-1 min-h-0">
        <div className="w-[860px] flex flex-col">
          <ChartToolbar />
          {panes.map((p) => (
            <Pane key={p.top} {...p}>
              {p.top === 114 && (
                <>
                  <Dash y={133} />
                  <Dash y={210} />
                  <HLine y={171} color="#c81010" />
                </>
              )}
              {p.top === 217 && <PriceChart />}
              {p.top === 425 && <CciChart />}
              {p.top === 528 && (
                <>
                  <Dash y={546} />
                  <Dash y={586} />
                  <Dash y={626} />
                </>
              )}
            </Pane>
          ))}
          <XAxis />
          <Overview />
          <div className="h-[4px] bg-[#d3d0ca] border-t border-[#999]" />
        </div>
        <Sidebar />
      </div>
    </div>
  );
}
